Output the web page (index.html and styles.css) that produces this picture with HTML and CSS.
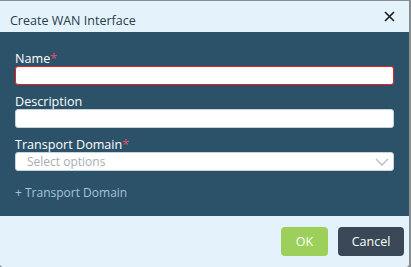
FILE: index.html
```html
<!DOCTYPE html>
<html>
<head>
    <title>Create WAN Interface</title>
    <link rel="stylesheet" href="styles.css">
</head>
<body>
    <div class="modal">
        <div class="modal-header">
            <span class="modal-title">Create WAN Interface</span>
            <button class="close-btn" aria-label="Close">
                <svg width="11" height="11" viewBox="0 0 11 11">
                    <path d="M1 1 L10 10 M10 1 L1 10" stroke="#1a1a1a" stroke-width="1.6" fill="none"/>
                </svg>
            </button>
        </div>

        <div class="modal-body">
            <div class="field">
                <label class="field-label">Name<span class="req">*</span></label>
                <input class="text-input invalid" type="text">
            </div>

            <div class="field">
                <label class="field-label">Description</label>
                <input class="text-input" type="text">
            </div>

            <div class="field">
                <label class="field-label">Transport Domain<span class="req">*</span></label>
                <div class="select-box">
                    <span class="placeholder">Select options</span>
                    <svg class="chevron" width="14" height="8" viewBox="0 0 14 8">
                        <path d="M1 1 L7 7 L13 1" stroke="#b8bcc0" stroke-width="1.4" fill="none"/>
                    </svg>
                </div>
            </div>

            <a class="add-link" href="#">+ Transport Domain</a>
        </div>

        <div class="modal-footer">
            <button class="btn btn-ok">OK</button>
            <button class="btn btn-cancel">Cancel</button>
        </div>
    </div>
</body>
</html>
```

FILE: styles.css
```css
body {
    margin: 0;
    background-color: #8a8d90;
    font-family: "Open Sans", Arial, sans-serif;
    font-size: 12px;
    height: 267px;
    overflow: hidden;
}

.modal {
    width: 409px;
    margin-top: 1px;
    height: 266px;
    display: flex;
    flex-direction: column;
    background-color: #e4f3fb;
    border-radius: 0 0 4px 4px;
    overflow: hidden;
}

.modal-header {
    height: 31px;
    display: flex;
    align-items: center;
    justify-content: space-between;
    padding: 0 10px;
    background-color: #e4f3fb;
}

.modal-title {
    font-size: 12.5px;
    line-height: 15px;
    padding-top: 7px;
    color: #2a3b4c;
}

.close-btn {
    background: none;
    border: none;
    padding: 0;
    margin-right: 4px;
    cursor: pointer;
    display: flex;
}

.modal-body {
    flex: 1;
    background-color: #2b5269;
    padding: 19px 15px 0 15px;
}

.field {
    margin-bottom: 9px;
}

.field-label {
    display: block;
    color: #ffffff;
    font-size: 12.6px;
    line-height: 15px;
}

.req {
    color: #e0506a;
}

.text-input {
    box-sizing: border-box;
    display: block;
    width: 379px;
    height: 19px;
    margin: 0;
    border: 1px solid #c8d4dc;
    border-radius: 3px;
    background-color: #ffffff;
    outline: none;
}

.text-input.invalid {
    border-color: #ee1c25;
}

.select-box {
    box-sizing: border-box;
    width: 379px;
    height: 19px;
    display: flex;
    align-items: center;
    justify-content: space-between;
    padding: 0 4px 0 11px;
    background-color: #ffffff;
    border: 1px solid #c8d4dc;
    border-radius: 3px;
}

.placeholder {
    color: #a9adb1;
    font-size: 12px;
}

.add-link {
    display: inline-block;
    margin-top: 5px;
    line-height: 15px;
    color: #a9c2d6;
    text-decoration: none;
    font-size: 12px;
}

.modal-footer {
    height: 50px;
    display: flex;
    justify-content: flex-end;
    align-items: center;
    gap: 10px;
    padding: 0 5px 1px 0;
    background-color: #e4f3fb;
}

.btn {
    height: 29px;
    border: none;
    border-radius: 4px;
    color: #ffffff;
    font-family: "Open Sans", Arial, sans-serif;
    font-size: 12.5px;
    cursor: pointer;
}

.btn-ok {
    width: 47px;
    background-color: #9dd05b;
}

.btn-cancel {
    width: 66px;
    background-color: #394757;
}
```
